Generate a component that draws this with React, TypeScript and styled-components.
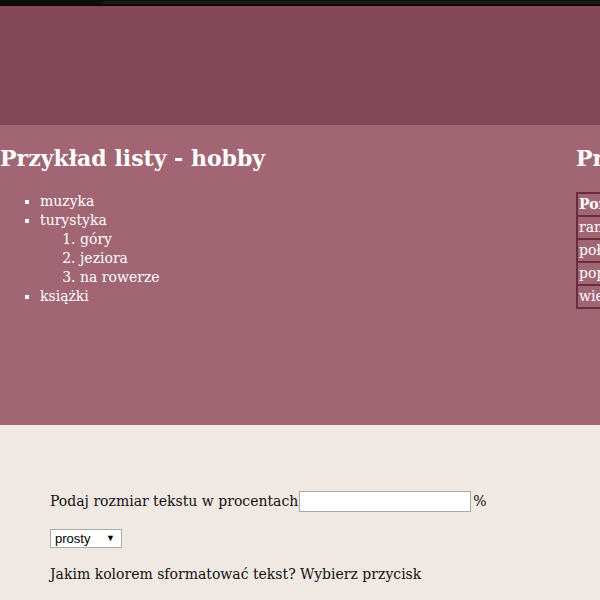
import React from "react";
import styled, { createGlobalStyle } from "styled-components";

const Global = createGlobalStyle`
  html, body { margin: 0; padding: 0; }
  body { background: #f0e8e2; font-family: "DejaVu Serif", "Liberation Serif", serif; overflow: hidden; }
  #root { width: 600px; overflow: hidden; }
`;

const TopBar = styled.div`
  height: 6px;
  background: #0d0d0d;
  border-bottom: 1px solid #000;
  display: flex;
  padding-top: 1px;
  box-sizing: border-box;
`;

const TopStrip = styled.div`
  margin-left: 103px;
  flex: 1;
  height: 3px;
  background: #1a1a1a;
`;

const Header = styled.header`
  height: 119px;
  background: #854859;
`;

const Main = styled.section`
  height: 300px;
  background: #a26574;
  color: #fff;
  display: flex;
  width: 1200px;
`;

const Column = styled.div<{ $width: number }>`
  width: ${(p) => p.$width}px;
  flex: none;
`;

const Heading = styled.h2`
  font-size: 22px;
  font-weight: bold;
  margin: 20px 0;
  line-height: 27px;
  white-space: nowrap;
`;

const Bullets = styled.ul`
  list-style: square;
  margin: 16px 0;
  padding-left: 40px;
  font-size: 14px;
  line-height: 19px;
`;

const Numbers = styled.ol`
  margin: 0;
  padding-left: 40px;
`;

const Table = styled.table`
  border-collapse: collapse;
  border: 2px solid #6a2c3f;
  font-size: 14px;
  line-height: 19px;
`;

const Cell = styled.td<{ $head?: boolean }>`
  border: 2px solid #6a2c3f;
  padding: 1px 1px;
  font-weight: ${(p) => (p.$head ? "bold" : "normal")};
  white-space: nowrap;
`;

const Form = styled.div`
  padding: 50px;
  color: #111;
  font-size: 14px;
`;

const Line = styled.p`
  margin: 16px 0;
  line-height: 21px;
  display: flex;
  align-items: center;
  white-space: pre;
`;

const TextInput = styled.input`
  width: 172px;
  height: 21px;
  box-sizing: border-box;
  border: 1px solid #a9a9a9;
  background: #fff;
  margin: 0 2px 0 1px;
  padding: 0;
`;

const Select = styled.div`
  width: 72px;
  height: 19px;
  box-sizing: border-box;
  border: 1px solid #a9a9a9;
  background: #fff;
  font-family: "Liberation Sans", Arial, sans-serif;
  font-size: 13px;
  color: #000;
  display: flex;
  align-items: center;
  justify-content: space-between;
  padding: 0 6px 0 4px;
  margin-top: 1px;
`;

const Arrow = styled.span`
  font-size: 9px;
`;

export default function App() {
  return (
    <>
      <Global />
      <TopBar>
        <TopStrip />
      </TopBar>
      <Header />
      <Main>
        <Column $width={576}>
          <Heading>Przykład listy - hobby</Heading>
          <Bullets>
            <li>muzyka</li>
            <li>
              turystyka
              <Numbers>
                <li>góry</li>
                <li>jeziora</li>
                <li>na rowerze</li>
              </Numbers>
            </li>
            <li>książki</li>
          </Bullets>
        </Column>
        <Column $width={576}>
          <Heading>Przykład tabeli</Heading>
          <Table>
            <tbody>
              <tr>
                <Cell $head>Pora dnia</Cell>
                <Cell $head>Zajęcie</Cell>
              </tr>
              <tr>
                <Cell>rano</Cell>
                <Cell>praca</Cell>
              </tr>
              <tr>
                <Cell>południe</Cell>
                <Cell>obiad</Cell>
              </tr>
              <tr>
                <Cell>popołudnie</Cell>
                <Cell>hobby</Cell>
              </tr>
              <tr>
                <Cell>wieczór</Cell>
                <Cell>odpoczynek</Cell>
              </tr>
            </tbody>
          </Table>
        </Column>
      </Main>
      <Form>
        <Line>
          Podaj rozmiar tekstu w procentach<TextInput type="text" />%
        </Line>
        <Line>
          <Select>
            <span>prosty</span>
            <Arrow>▼</Arrow>
          </Select>
        </Line>
        <Line>Jakim kolorem sformatować tekst? Wybierz przycisk</Line>
      </Form>
    </>
  );
}
